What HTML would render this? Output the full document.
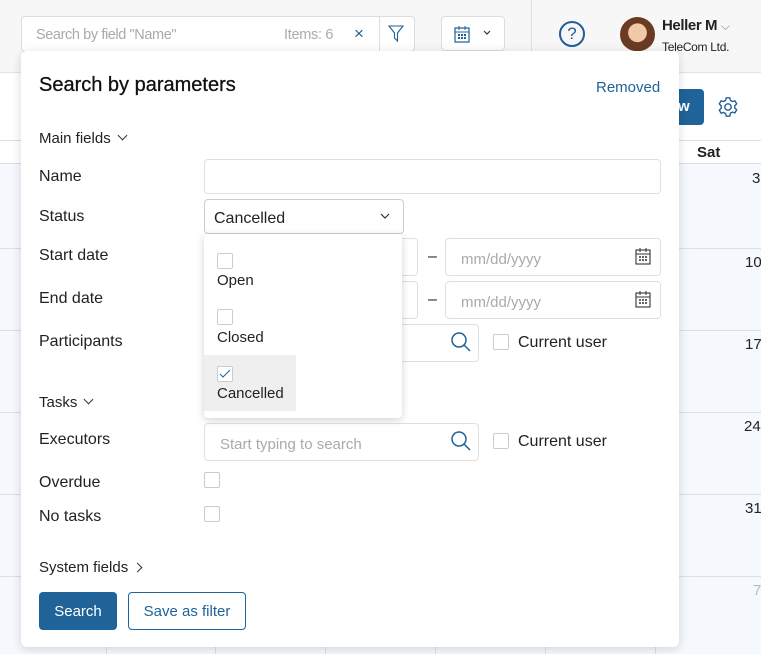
<!DOCTYPE html>
<html><head><meta charset="utf-8"><style>
*{box-sizing:border-box;margin:0;padding:0}
body{width:761px;height:654px;overflow:hidden;position:relative;font-family:"Liberation Sans",sans-serif;background:#fff;color:#222}
.abs{position:absolute}
.top{left:0;top:0;width:761px;height:73px;background:#f7f7f7;border-bottom:1px solid #e3e3e3}
.cal{left:0;top:163px;width:761px;height:491px;background:#f5f8fc}
.hl{position:absolute;left:0;width:761px;height:1px;background:#dedede}
.vl{position:absolute;top:163px;width:1px;height:491px;background:#dedede}
.pop{left:21px;top:51px;width:658px;height:596px;background:#fff;border-radius:6px;box-shadow:0 2px 10px rgba(0,0,0,.15)}
.lbl{position:absolute;left:39px;font-size:16px;color:#222;margin-top:2px}
.inp{position:absolute;border:1px solid #e0e0e0;border-radius:4px;background:#fff}
.ph{position:absolute;font-size:15px;color:#aaa;margin-top:1px}
.cb{position:absolute;width:16px;height:16px;border:1px solid #ccc;border-radius:2px;background:#fff}
.sec{position:absolute;left:39px;font-size:15px;color:#222;margin-top:1px}
.chev{display:inline-block;width:7px;height:7px;border-right:1.3px solid #333;border-bottom:1.3px solid #333;transform:rotate(45deg);margin-left:8px;position:relative;top:-4px}
</style></head><body>
<div class="abs top"></div>
<div class="abs" style="left:531px;top:0;width:1px;height:73px;background:#e0e0e0"></div>
<div class="abs inp" style="left:21px;top:16px;width:394px;height:36px;border-color:#ddd"></div>
<div class="abs" style="left:36px;top:27px;font-size:14.5px;color:#aaa;letter-spacing:-.4px">Search by field "Name"</div>
<div class="abs" style="left:284px;top:27px;font-size:14.5px;color:#aaa;letter-spacing:-.3px">Items: 6</div>
<div class="abs" style="left:354px;top:24px;font-size:17px;color:#1f5f96">×</div>
<div class="abs" style="left:379px;top:17px;width:1px;height:34px;background:#ddd"></div>
<svg class="abs" style="left:388px;top:24px" width="16" height="20"><path d="M1 2h14l-5.5 7v8l-3-3V9z" fill="none" stroke="#1f5f96" stroke-width="1.1"/></svg>
<div class="abs inp" style="left:441px;top:16px;width:64px;height:35px;border-color:#ddd"></div>
<svg class="abs" style="left:454px;top:25px" width="16" height="18"><rect x="1" y="3" width="14" height="14" fill="none" stroke="#1f5f96" stroke-width="1.2"/><path d="M1 7h14M5 1v4M11 1v4" stroke="#1f5f96"/><g fill="#1f5f96"><rect x="4" y="9" width="2" height="2"/><rect x="7" y="9" width="2" height="2"/><rect x="10" y="9" width="2" height="2"/><rect x="4" y="12" width="2" height="2"/><rect x="7" y="12" width="2" height="2"/><rect x="10" y="12" width="2" height="2"/></g></svg>
<svg class="abs" style="left:482px;top:29px" width="10" height="8"><path d="M2 2l3 3 3-3" fill="none" stroke="#333" stroke-width="1.2"/></svg>
<div class="abs" style="left:559px;top:21px;width:26px;height:26px;border:2px solid #1f5f96;border-radius:50%;color:#1f5f96;font-size:17px;text-align:center;line-height:22px">?</div>
<div class="abs" style="left:620px;top:17px;width:35px;height:35px;border-radius:50%;background:radial-gradient(circle at 50% 45%,#f1c8a8 0 35%,#6b3a22 37% 70%,#e6e6e6 72%)"></div>
<div class="abs" style="left:662px;top:17px;font-size:15px;font-weight:bold;color:#222;letter-spacing:-.4px">Heller M <span style="font-weight:normal;color:#888;font-size:12px">⌵</span></div>
<div class="abs" style="left:662px;top:40px;font-size:12px;color:#222;letter-spacing:-.3px">TeleCom Ltd.</div>
<div class="abs" style="left:660px;top:89px;width:44px;height:36px;background:#1f6399;border-radius:4px;color:#fff;font-weight:bold;font-size:15px;line-height:36px;padding-left:18px">w</div>
<svg class="abs" style="left:717px;top:96px" width="22" height="22" viewBox="0 0 24 24"><circle cx="12" cy="12" r="3.5" fill="none" stroke="#1f5f96" stroke-width="1.5"/><path d="M10 2h4l.6 2.8 2.2 1.3 2.7-.9 2 3.4-2.1 1.9v2.6l2.1 1.9-2 3.4-2.7-.9-2.2 1.3L14 22h-4l-.6-2.8-2.2-1.3-2.7.9-2-3.4 2.1-1.9v-2.6L2.5 8.6l2-3.4 2.7.9 2.2-1.3z" fill="none" stroke="#1f5f96" stroke-width="1.5" stroke-linejoin="round"/></svg>
<div class="hl" style="top:140px"></div>
<div class="abs cal"></div>
<div class="hl" style="top:163px"></div>
<div class="hl" style="top:248px"></div>
<div class="hl" style="top:330px"></div>
<div class="hl" style="top:412px"></div>
<div class="hl" style="top:494px"></div>
<div class="hl" style="top:576px"></div>
<div class="vl" style="left:106px"></div><div class="vl" style="left:215px"></div><div class="vl" style="left:325px"></div><div class="vl" style="left:435px"></div><div class="vl" style="left:545px"></div><div class="vl" style="left:655px"></div>
<div class="abs" style="left:697px;top:144px;font-size:15px;font-weight:bold">Sat</div>
<div class="abs" style="left:752px;top:170px;font-size:15px">3</div>
<div class="abs" style="left:745px;top:254px;font-size:15px">10</div>
<div class="abs" style="left:745px;top:336px;font-size:15px">17</div>
<div class="abs" style="left:744px;top:418px;font-size:15px">24</div>
<div class="abs" style="left:745px;top:500px;font-size:15px">31</div>
<div class="abs" style="left:753px;top:582px;font-size:15px;color:#bbb">7</div>

<div class="abs pop"></div>
<div class="abs" style="left:39px;top:74px;font-size:20px;color:#111;-webkit-text-stroke:0.3px #111">Search by parameters</div>
<div class="abs" style="left:596px;top:79px;font-size:15px;color:#1f6399">Removed</div>
<div class="sec" style="top:129px">Main fields<span class="chev"></span></div>
<div class="lbl" style="top:166px">Name</div>
<div class="inp" style="left:204px;top:159px;width:457px;height:35px"></div>
<div class="lbl" style="top:206px">Status</div>
<div class="inp" style="left:204px;top:199px;width:200px;height:35px;border-color:#ccc"></div>
<div class="abs" style="left:214px;top:210px;font-size:16px">Cancelled</div>
<svg class="abs" style="left:380px;top:212px" width="10" height="8"><path d="M1 2l4 4 4-4" fill="none" stroke="#333" stroke-width="1.2"/></svg>
<div class="lbl" style="top:245px">Start date</div>
<div class="inp" style="left:380px;top:238px;width:38px;height:38px"></div>
<div class="abs" style="left:428px;top:248px">–</div>
<div class="inp" style="left:445px;top:238px;width:216px;height:38px"></div>
<div class="ph" style="left:461px;top:250px">mm/dd/yyyy</div>
<div class="lbl" style="top:288px">End date</div>
<div class="inp" style="left:380px;top:281px;width:38px;height:38px"></div>
<div class="abs" style="left:428px;top:291px">–</div>
<div class="inp" style="left:445px;top:281px;width:216px;height:38px"></div>
<div class="ph" style="left:461px;top:293px">mm/dd/yyyy</div>
<svg class="abs" style="left:635px;top:247px" width="16" height="18"><rect x="1" y="3" width="14" height="14" fill="none" stroke="#333" stroke-width="1.1"/><path d="M1 7h14M5 1v4M11 1v4" stroke="#333"/><path d="M4 10h8M4 13h8" stroke="#333" stroke-width="1.5" stroke-dasharray="2 1"/></svg>
<svg class="abs" style="left:635px;top:290px" width="16" height="18"><rect x="1" y="3" width="14" height="14" fill="none" stroke="#333" stroke-width="1.1"/><path d="M1 7h14M5 1v4M11 1v4" stroke="#333"/><path d="M4 10h8M4 13h8" stroke="#333" stroke-width="1.5" stroke-dasharray="2 1"/></svg>
<div class="lbl" style="top:331px">Participants</div>
<div class="inp" style="left:380px;top:324px;width:99px;height:38px"></div>
<svg class="abs" style="left:450px;top:331px" width="22" height="22"><circle cx="9" cy="9" r="7" fill="none" stroke="#1f6399" stroke-width="1.5"/><path d="M14 14l6 6" stroke="#1f6399" stroke-width="1.5"/></svg>
<div class="cb" style="left:493px;top:334px"></div>
<div class="abs" style="left:518px;top:334px;font-size:16px">Current user</div>
<div class="sec" style="top:393px">Tasks<span class="chev"></span></div>
<div class="lbl" style="top:429px">Executors</div>
<div class="inp" style="left:204px;top:423px;width:275px;height:38px"></div>
<div class="ph" style="left:220px;top:435px">Start typing to search</div>
<svg class="abs" style="left:450px;top:430px" width="22" height="22"><circle cx="9" cy="9" r="7" fill="none" stroke="#1f6399" stroke-width="1.5"/><path d="M14 14l6 6" stroke="#1f6399" stroke-width="1.5"/></svg>
<div class="cb" style="left:493px;top:433px"></div>
<div class="abs" style="left:518px;top:433px;font-size:16px">Current user</div>
<div class="lbl" style="top:472px">Overdue</div>
<div class="cb" style="left:204px;top:472px"></div>
<div class="lbl" style="top:506px">No tasks</div>
<div class="cb" style="left:204px;top:506px"></div>
<div class="sec" style="top:558px">System fields<span class="chev" style="transform:rotate(-45deg);top:-1px;margin-left:6px"></span></div>
<div class="abs" style="left:39px;top:592px;width:78px;height:38px;background:#1f6399;border-radius:4px;color:#fff;font-size:15px;text-align:center;line-height:40px">Search</div>
<div class="abs" style="left:128px;top:592px;width:118px;height:38px;border:1px solid #1f6399;border-radius:4px;color:#1f6399;font-size:15px;text-align:center;line-height:38px">Save as filter</div>

<div class="abs" style="left:204px;top:234px;width:198px;height:184px;background:#fff;border-radius:4px;box-shadow:0 2px 8px rgba(0,0,0,.18)"></div>
<div class="abs" style="left:204px;top:355px;width:92px;height:56px;background:#efefef"></div>
<div class="cb" style="left:217px;top:253px"></div>
<div class="abs" style="left:217px;top:272px;font-size:15px">Open</div>
<div class="cb" style="left:217px;top:309px"></div>
<div class="abs" style="left:217px;top:329px;font-size:15px">Closed</div>
<div class="cb" style="left:217px;top:366px"></div>
<svg class="abs" style="left:219px;top:369px" width="12" height="10"><path d="M1 5l3 3 7-7" fill="none" stroke="#1f6399" stroke-width="1"/></svg>
<div class="abs" style="left:217px;top:385px;font-size:15px">Cancelled</div>
</body></html>
